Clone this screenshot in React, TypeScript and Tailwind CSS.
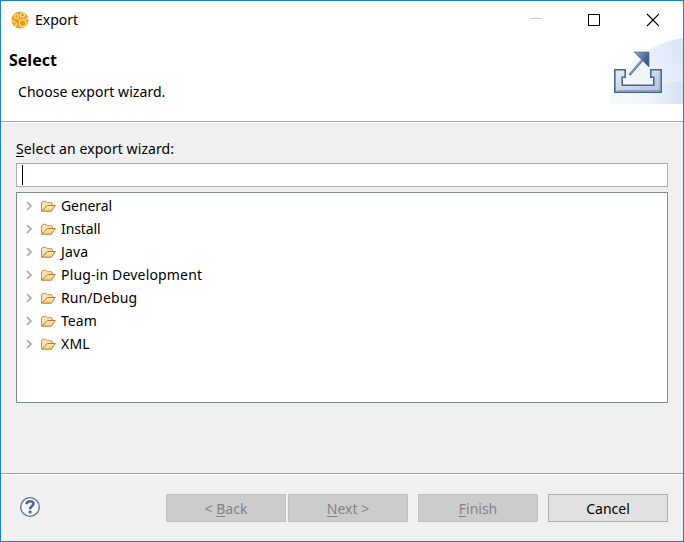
import React from "react";

const items: [string, string][] = [
  ["General", "tracking-[-0.1px]"],
  ["Install", "tracking-[-0.1px]"],
  ["Java", "tracking-[0.15px]"],
  ["Plug-in Development", "tracking-[0.17px]"],
  ["Run/Debug", "tracking-[0.1px]"],
  ["Team", "tracking-[0.05px]"],
  ["XML", "tracking-[0.2px]"],
];

function AppIcon() {
  return (
    <svg width="20" height="20" viewBox="0 0 20 20" className="shrink-0">
      <circle cx="10" cy="10" r="8.6" fill="#f0a31c" />
      <g fill="none" stroke="#fff0d0" strokeWidth="1">
        <circle cx="6.4" cy="6.4" r="1.9" fill="#ef9c08" />
        <circle cx="12.4" cy="5" r="2.2" fill="#ef9c08" />
        <circle cx="12.7" cy="13.2" r="3.4" fill="#ef9c08" />
        <path d="M1 11H4L6.5 13.5L5 17.5M8.3 8.6L10 10.4M15.5 9L19 8.2" />
      </g>
    </svg>
  );
}

function Folder() {
  return (
    <svg width="16" height="14" viewBox="0 0 16 14" className="ml-[7px] shrink-0">
      <defs>
        <linearGradient id="fold" x1="0" y1="0" x2="0" y2="1">
          <stop offset="0" stopColor="#fff0bb" />
          <stop offset="1" stopColor="#f3ca78" />
        </linearGradient>
      </defs>
      <path d="M1.5 12V4L2.8 2.3H6L7.2 3.7H11.8L12.5 6" fill="#f9e3b4" stroke="#c99255" />
      <path d="M1.7 12.2L5 8.7L7.5 6.5H15.3L11.3 12.2Z" fill="url(#fold)" stroke="#b9772c" strokeLinejoin="round" />
    </svg>
  );
}

function Banner() {
  return (
    <svg width="75" height="66" viewBox="0 0 75 66" className="block">
      <defs>
        <linearGradient id="bg" x1="0" y1="0.8" x2="1" y2="0.3">
          <stop offset="0" stopColor="#f6f9fd" />
          <stop offset="0.5" stopColor="#f0f4fb" />
          <stop offset="1" stopColor="#dde7f6" />
        </linearGradient>
        <linearGradient id="bg2" x1="0" y1="0" x2="1" y2="0">
          <stop offset="0" stopColor="#e8eef9" stopOpacity="0.3" />
          <stop offset="1" stopColor="#d5e0f3" />
        </linearGradient>
        <linearGradient id="tray" x1="0" y1="0" x2="1" y2="1">
          <stop offset="0" stopColor="#e6edf8" />
          <stop offset="1" stopColor="#b3c1dc" />
        </linearGradient>
        <linearGradient id="head" x1="0" y1="0" x2="1" y2="0.6">
          <stop offset="0" stopColor="#93a8c8" />
          <stop offset="1" stopColor="#2f548a" />
        </linearGradient>
      </defs>
      <path d="M0 66C8 35 32 7 75 0V66Z" fill="url(#bg)" />
      <path d="M38 66C45 50 58 44 75 43V66Z" fill="url(#bg2)" />
      <path d="M6.8 31.8H17.2V39.2H14.2V47.2H45.8V39.2H42.8V31.8H53.2V54.2H6.8Z" fill="url(#tray)" stroke="#456797" strokeWidth="1.6" />
      <path d="M9 52.5H52V34" fill="none" stroke="#8ba2c6" strokeWidth="1" />
      <path d="M21.5 37L36 20" stroke="#62789f" strokeWidth="2.4" />
      <path d="M22 36L34 21.5" stroke="#a0b0cb" strokeWidth="0.8" />
      <path d="M26 14H41V29Z" fill="url(#head)" stroke="#456797" strokeWidth=".6" />
    </svg>
  );
}

function Divider() {
  return (
    <div className="shrink-0">
      <div className="h-px bg-[#a0a0a0]" />
      <div className="h-px bg-white" />
    </div>
  );
}

function Btn({ children, disabled }: { children: React.ReactNode; disabled?: boolean }) {
  return (
    <button
      className={
        "h-[28px] w-[120px] border pt-px text-center leading-[26px] " +
        (disabled ? "border-[#bfbfbf] bg-[#cccccc] text-[#838383]" : "border-[#adadad] bg-[#e1e1e1] text-black")
      }
    >
      {children}
    </button>
  );
}

function Key({ children }: { children: string }) {
  return <span className="underline decoration-1 underline-offset-2">{children}</span>;
}

export default function App() {
  return (
    <div className="flex h-[542px] w-[684px] flex-col overflow-hidden border border-[#1a80d2] bg-[#f0f0f0] font-['Noto_Sans','Open_Sans',sans-serif] text-[14px] text-black">
      <header className="flex h-[120px] shrink-0 flex-col bg-white">
        <div className="flex h-[37px] shrink-0 items-center pl-[9px]">
          <AppIcon />
          <span className="ml-[5px] leading-[20px]">Export</span>
          <svg width="130" height="14" viewBox="0 0 130 14" className="mr-[24px] ml-auto" shapeRendering="crispEdges">
            <path d="M1 5.5H13" stroke="#cccccc" />
            <rect x="59.5" y="1.5" width="11" height="11" fill="none" stroke="#000" />
            <path d="M118 1L130 13M130 1L118 13" stroke="#000" shapeRendering="auto" strokeWidth="1.1" />
          </svg>
        </div>
        <div className="flex justify-between">
          <div>
            <h1 className="mt-[11px] ml-[8px] text-[16px] leading-[22px] font-bold">Select</h1>
            <p className="mt-[11px] ml-[17px] leading-[20px] tracking-[0.06px]">Choose export wizard.</p>
          </div>
          <Banner />
        </div>
      </header>
      <Divider />
      <main className="flex h-[350px] shrink-0 flex-col px-[15px]">
        <label className="mt-[16px] leading-[20px] tracking-[0.08px]">
          <Key>S</Key>elect an export wizard:
        </label>
        <div className="mt-[4px] flex h-[24px] shrink-0 items-center border border-[#abadb3] bg-white pl-[5px]">
          <div className="h-[20px] w-px bg-black" />
        </div>
        <ul className="mt-[5px] h-[211px] shrink-0 border border-[#828790] bg-white pt-px">
          {items.map(([name, cls]) => (
            <li key={name} className="flex h-[23px] items-center">
              <svg width="7" height="10" viewBox="0 0 7 10" className="ml-[9px] shrink-0">
                <path d="M1 1L5 5L1 9" fill="none" stroke="#a6a6a6" strokeWidth="1.6" />
              </svg>
              <Folder />
              <span className={"ml-[5px] leading-[20px] " + cls}>{name}</span>
            </li>
          ))}
        </ul>
      </main>
      <Divider />
      <footer className="flex items-start pt-[19px] pr-[15px] pl-[18px]">
        <svg width="22" height="22" viewBox="0 0 22 22" className="mt-[2px]">
          <circle cx="11" cy="11" r="9.3" fill="#f7f8fb" stroke="#5a6f96" strokeWidth="1.3" />
          <path d="M7.6 8.3C7.6 4.3 14.4 4.3 14.4 7.8C14.4 10.3 11 10.2 11 13.2" fill="none" stroke="#52658f" strokeWidth="2.7" />
          <rect x="9.6" y="14.6" width="2.9" height="2.8" rx="1" fill="#52658f" />
        </svg>
        <div className="ml-auto flex">
          <Btn disabled>&lt; <Key>B</Key>ack</Btn>
          <div className="mr-[10px] ml-[2px]">
            <Btn disabled><Key>N</Key>ext &gt;</Btn>
          </div>
          <div className="mr-[10px]">
            <Btn disabled><Key>F</Key>inish</Btn>
          </div>
          <Btn>Cancel</Btn>
        </div>
      </footer>
    </div>
  );
}
